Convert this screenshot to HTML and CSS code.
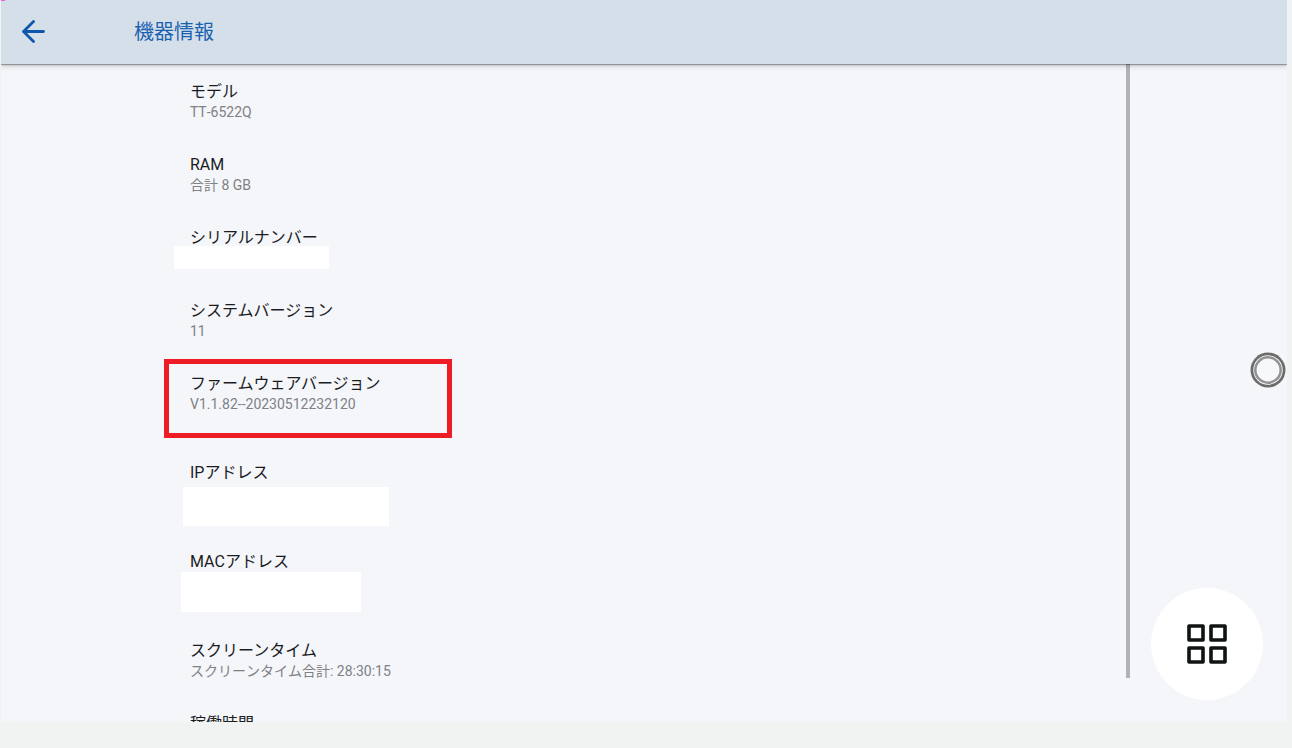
FILE: index.html
```
<!DOCTYPE html>
<html lang="ja">

<head>
    <meta charset="UTF-8" />
    <meta name="viewport" content="width=device-width, initial-scale=1.0">
    <title>機器情報</title>
    <link rel="stylesheet" href="styles.css">
</head>

<body>
    <div class="screen">
        <header class="topbar">
            <button class="back" type="button" aria-label="戻る">
                <svg width="24" height="24" viewBox="0 0 24 24" fill="none" stroke="currentColor" stroke-width="2.8" stroke-linecap="round" stroke-linejoin="round">
                    <path d="M12.5 1.5 L2.5 11.5 L12.5 21.5 M3 11.5 H22.5" />
                </svg>
            </button>
            <h1>機器情報</h1>
        </header>

        <main class="content">
            <dl class="info">
                <div class="item">
                    <dt>モデル</dt>
                    <dd>TT-6522Q</dd>
                </div>
                <div class="item">
                    <dt>RAM</dt>
                    <dd>合計 8 GB</dd>
                </div>
                <div class="item">
                    <dt>シリアルナンバー</dt>
                    <dd class="mask mask-serial"></dd>
                </div>
                <div class="item">
                    <dt>システムバージョン</dt>
                    <dd>11</dd>
                </div>
                <div class="item tall marked">
                    <dt>ファームウェアバージョン</dt>
                    <dd>V1.1.82--20230512232120</dd>
                </div>
                <div class="item tall">
                    <dt>IPアドレス</dt>
                    <dd class="mask mask-ip"></dd>
                </div>
                <div class="item tall">
                    <dt>MACアドレス</dt>
                    <dd class="mask mask-mac"></dd>
                </div>
                <div class="item">
                    <dt>スクリーンタイム</dt>
                    <dd>スクリーンタイム合計: 28:30:15</dd>
                </div>
                <div class="item">
                    <dt>稼働時間</dt>
                </div>
            </dl>
            <div class="scrollbar"></div>
        </main>

        <button class="assist" type="button" aria-label="アシスト">
            <svg width="36" height="36" viewBox="0 0 36 36">
                <circle cx="18" cy="18" r="17.5" fill="#6c6c6c" />
                <circle cx="18" cy="18" r="14.7" fill="#fff" />
                <circle cx="18" cy="18" r="12.7" fill="#f7f8fb" stroke="#929292" stroke-width="2.5" />
            </svg>
        </button>

        <button class="apps" type="button" aria-label="アプリ一覧">
            <svg width="40" height="40" viewBox="0 0 40 40" fill="none" stroke="#111415" stroke-width="3.6" stroke-linejoin="round">
                <rect x="2" y="2" width="14" height="14" />
                <rect x="24" y="2" width="14" height="14" />
                <rect x="2" y="24" width="14" height="14" />
                <rect x="24" y="24" width="14" height="14" />
            </svg>
        </button>
    </div>
</body>

</html>
```

FILE: styles.css
```
*,
*::before,
*::after {
    box-sizing: border-box;
}

body {
    margin: 0;
    padding: 0 5px 26px 1px;
    height: 100vh;
    background-color: #f1f3f2;
    font-family: Roboto, 'Noto Sans CJK JP', sans-serif;
    color: #1b1c1f;
}

button {
    padding: 0;
    border: none;
    background: none;
    cursor: pointer;
}

svg {
    display: block;
}

.screen {
    position: relative;
    display: flex;
    flex-direction: column;
    height: 100%;
    overflow: hidden;
    background-color: #f4f6fa;
}

.screen::before {
    content: '';
    position: absolute;
    top: 0;
    left: 0;
    width: 4px;
    height: 1px;
    background-color: #ea5fe0;
    z-index: 2;
}

.topbar {
    display: flex;
    align-items: center;
    flex: none;
    height: 64px;
    padding-left: 20px;
    gap: 89px;
    background-color: #d5dfe9;
    box-shadow: 0 1px 1px rgba(0, 0, 0, 0.3), 0 2px 5px rgba(0, 0, 0, 0.2);
    z-index: 1;
}

.back {
    color: #0d57ad;
}

h1 {
    margin: 0;
    font-size: 20px;
    font-weight: 400;
    line-height: 28px;
    color: #1a62b0;
}

.content {
    display: flex;
    flex: 1;
    min-height: 0;
    padding-right: 157px;
}

.info {
    flex: 1;
    margin: 0;
    padding: 17px 0 0 189px;
}

.item {
    position: relative;
    height: 73px;
}

.tall {
    height: 89px;
}

dt {
    font-size: 16px;
    line-height: 22px;
}

dd {
    margin: 0;
    font-size: 14px;
    font-kerning: none;
    line-height: 18px;
    color: #808185;
}

/* frame around the firmware version */
.marked::after {
    content: '';
    position: absolute;
    top: -14px;
    left: -26px;
    width: 288px;
    height: 79px;
    border: 5px solid #ee1c25;
}

/* hidden values */
.mask {
    position: absolute;
    background-color: #fff;
}

.mask-serial {
    top: 19px;
    left: -16px;
    width: 155px;
    height: 23px;
}

.mask-ip {
    top: 25px;
    left: -7px;
    width: 206px;
    height: 39px;
}

.mask-mac {
    top: 21px;
    left: -9px;
    width: 180px;
    height: 40px;
}

.scrollbar {
    width: 4px;
    margin-bottom: 44px;
    background-color: #b1b1b6;
}

.assist {
    position: absolute;
    right: 1px;
    bottom: 334px;
}

.apps {
    position: absolute;
    right: 24px;
    bottom: 22px;
    display: flex;
    align-items: center;
    justify-content: center;
    width: 112px;
    height: 112px;
    border-radius: 50%;
    background-color: #fff;
}
```
